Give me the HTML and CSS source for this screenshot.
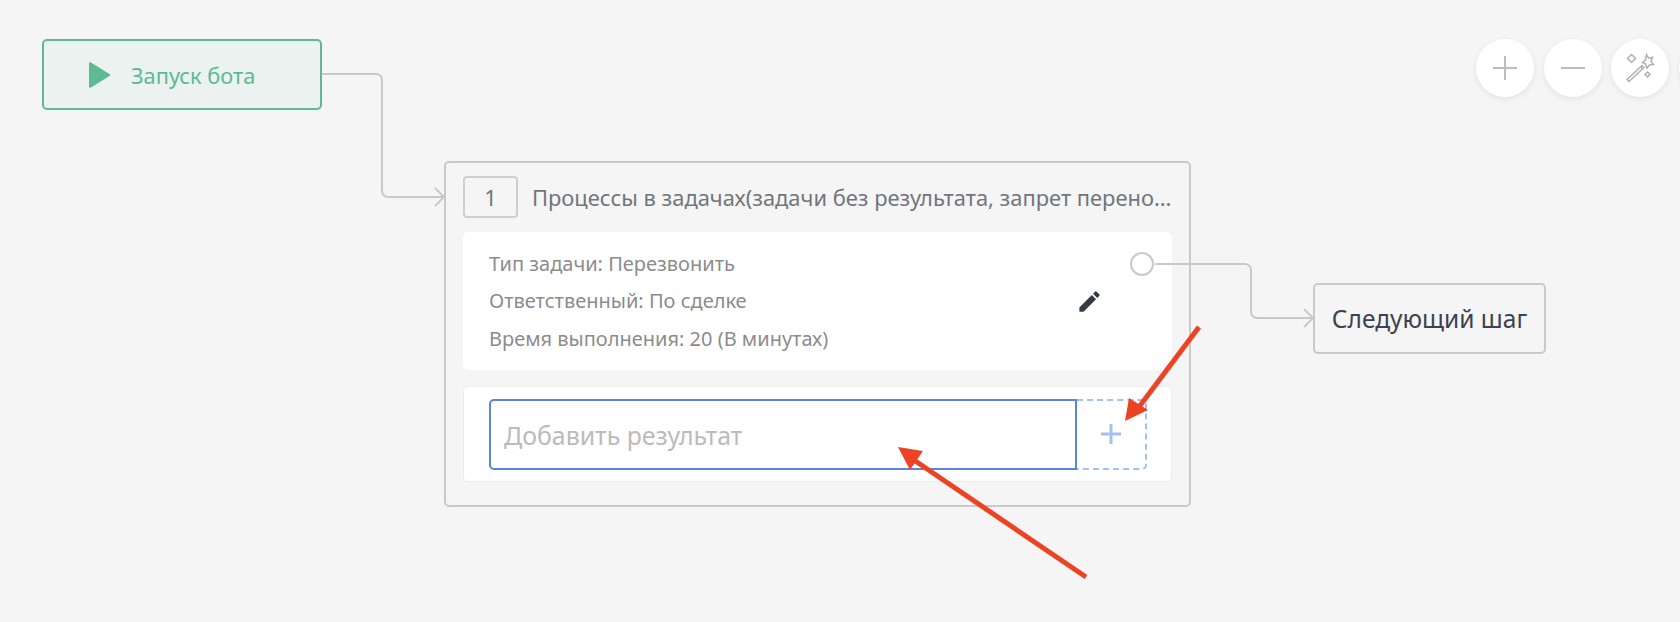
FILE: index.html
```html
<!DOCTYPE html>
<html>
<head>
  <meta charset="UTF-8">
  <link rel="stylesheet" href="styles.css">
</head>
<body>
  <div class="canvas">
    <div class="start-node">
      <svg class="play-icon" width="22" height="28" viewBox="0 0 22 28">
        <path d="M2 1.5L20.5 13a1.2 1.2 0 0 1 0 2L2 26.5a1.2 1.2 0 0 1-2-1V2.5a1.2 1.2 0 0 1 2-1z"/>
      </svg>
      <span>Запуск бота</span>
    </div>

    <div class="step-node">
      <div class="step-header">
        <div class="step-num">1</div>
        <div class="step-title">Процессы в задачах(задачи без результата, запрет перено...</div>
      </div>
      <div class="task-card">
        <div class="task-lines">
          <div>Тип задачи: Перезвонить</div>
          <div>Ответственный: По сделке</div>
          <div>Время выполнения: 20 (В минутах)</div>
        </div>
        <svg class="edit-icon" width="27" height="27" viewBox="0 0 24 24">
          <path d="M3 17.25V21h3.75L17.81 9.94l-3.75-3.75L3 17.25zM20.71 7.04c.39-.39.39-1.02 0-1.41l-2.34-2.34c-.39-.39-1.02-.39-1.41 0l-1.83 1.83 3.75 3.75 1.83-1.83z"/>
        </svg>
        <div class="port"></div>
      </div>
      <div class="result-card">
        <input class="result-input" type="text" placeholder="Добавить результат">
        <div class="result-add">
          <svg width="20" height="20" viewBox="0 0 20 20"><path d="M10 0V20M0 10H20"/></svg>
        </div>
      </div>
    </div>

    <div class="next-node">Следующий шаг</div>

    <svg class="wires" width="1680" height="622" viewBox="0 0 1680 622">
      <g class="wire">
        <path d="M322 74H376a6 6 0 0 1 6 6V191a6 6 0 0 0 6 6H443"/>
        <path d="M435 188l9 9-9 9"/>
        <path d="M1155 264H1245a6 6 0 0 1 6 6V312a6 6 0 0 0 6 6H1312"/>
        <path d="M1304 309l9 9-9 9"/>
      </g>
    </svg>

    <div class="zoom-controls">
      <div class="round-btn">
        <svg width="26" height="26" viewBox="0 0 26 26"><path d="M13 1V25M1 13H25"/></svg>
      </div>
      <div class="round-btn">
        <svg width="26" height="26" viewBox="0 0 26 26"><path d="M1 13H25"/></svg>
      </div>
      <div class="round-btn">
        <svg width="30" height="30" viewBox="0 0 30 30" class="wand">
          <path d="M2 26.5L4 28.500L19 14.500L17 12.500Z"/>
          <path d="M15.500 14L17.500 16"/>
          <path d="M21.500 1.500L23.500 5L27.500 4.500L26 8.500L28.500 11.500L24.500 12L22 15L20.500 11L17.500 9.500L20.500 7Z"/>
          <path d="M6.500 1.500L10.500 5.500L6.500 9.500L2.500 5.500Z"/>
          <path d="M22.500 19L25 21.500L22.500 24L20 21.500Z"/>
        </svg>
      </div>
      <div class="round-btn"></div>
    </div>

    <svg class="marks" width="1680" height="622" viewBox="0 0 1680 622">
      <path class="mark-line" d="M1086 577L908 456"/>
      <path class="mark-head" d="M898 447L923 451L910 470Z"/>
      <path class="mark-line" d="M1199 327L1136 411"/>
      <path class="mark-head" d="M1125 421L1148 410L1129 398Z"/>
    </svg>
  </div>
</body>
</html>
```

FILE: styles.css
```css
body {
  margin: 0;
  background-color: #f5f5f5;
  font-family: "Noto Sans", sans-serif;
}

.canvas {
  position: relative;
  width: 1680px;
  height: 622px;
  overflow: hidden;
}

.wires,
.marks {
  position: absolute;
  top: 0;
  left: 0;
}

.marks {
  z-index: 5;
}

.wire path {
  fill: none;
  stroke: #c9c9c9;
  stroke-width: 2;
}

.mark-line {
  fill: none;
  stroke: #ee4225;
  stroke-width: 5;
}

.mark-head {
  fill: #ee4225;
}

/* Nodes */
.start-node {
  position: absolute;
  left: 42px;
  top: 39px;
  width: 280px;
  height: 71px;
  box-sizing: border-box;
  display: flex;
  align-items: center;
  padding-left: 45px;
  gap: 20px;
  background-color: #ecf2f0;
  border: 2px solid #5cbb92;
  border-radius: 5px;
  color: #5cbb92;
  font-size: 21.800px;
}

.start-node span {
  padding-top: 2px;
}

.play-icon {
  fill: #5cbb92;
}

.step-node {
  position: absolute;
  left: 444px;
  top: 161px;
  width: 747px;
  height: 346px;
  box-sizing: border-box;
  display: flex;
  flex-direction: column;
  padding: 13px 17px 0 17px;
  border: 2px solid #c9c9c9;
  border-radius: 5px;
  background-color: #f5f5f5;
}

.step-header {
  display: flex;
  align-items: center;
  gap: 14px;
  height: 42px;
  margin-bottom: 14px;
}

.step-num {
  width: 55px;
  height: 42px;
  box-sizing: border-box;
  flex-shrink: 0;
  display: flex;
  align-items: center;
  justify-content: center;
  border: 2px solid #cfcfcf;
  border-radius: 4px;
  color: #70767c;
  font-size: 22px;
}

.step-title {
  color: #70767c;
  font-size: 21.900px;
  white-space: nowrap;
}

.task-card {
  position: relative;
  height: 138px;
  display: flex;
  align-items: center;
  justify-content: space-between;
  padding: 0 69px 0 26px;
  margin-bottom: 16px;
  background-color: #fff;
  border-radius: 5px;
}

.task-lines {
  color: #8c8c8c;
  font-size: 20px;
  line-height: 37.500px;
}

.edit-icon {
  fill: #333b45;
}

.port {
  position: absolute;
  right: 18px;
  top: 20px;
  width: 24px;
  height: 24px;
  box-sizing: border-box;
  background-color: #fff;
  border: 2px solid #c9c9c9;
  border-radius: 50%;
}

.result-card {
  height: 96px;
  box-sizing: border-box;
  display: flex;
  align-items: center;
  padding-left: 25px;
  background-color: #fff;
  border: 1px solid #ececec;
  border-radius: 5px;
}

.result-input {
  width: 588px;
  height: 71px;
  box-sizing: border-box;
  padding: 2px 13px 0;
  background-color: #fff;
  border: 2px solid #5b84e0;
  border-radius: 5px 0 0 5px;
  outline: none;
  font-family: "Noto Sans", sans-serif;
  font-size: 24.900px;
}

.result-input::placeholder {
  color: #bbbbbb;
  opacity: 1;
}

.result-add {
  width: 70px;
  height: 71px;
  box-sizing: border-box;
  display: flex;
  align-items: center;
  justify-content: center;
  border: 2px dashed #a6bff3;
  border-left: none;
  border-radius: 0 5px 5px 0;
}

.result-add path {
  fill: none;
  stroke: #a6bff3;
  stroke-width: 3;
}

.next-node {
  position: absolute;
  left: 1313px;
  top: 283px;
  width: 233px;
  height: 71px;
  box-sizing: border-box;
  display: flex;
  align-items: center;
  justify-content: center;
  background-color: #f5f5f5;
  border: 2px solid #c9c9c9;
  border-radius: 5px;
  color: #3c4350;
  font-size: 24.500px;
  white-space: nowrap;
}

/* Zoom buttons */
.zoom-controls {
  position: absolute;
  left: 1476px;
  top: 39px;
  display: flex;
  gap: 9.500px;
}

.round-btn {
  width: 58px;
  height: 58px;
  flex-shrink: 0;
  display: flex;
  align-items: center;
  justify-content: center;
  background-color: #fff;
  border-radius: 50%;
  box-shadow: 0 2px 6px rgba(0,0,0,0.08);
}

.round-btn path {
  fill: none;
  stroke: #bdbdbd;
  stroke-width: 2;
}

.wand path {
  stroke: #b0b0b0;
  stroke-width: 1.500;
}
```
